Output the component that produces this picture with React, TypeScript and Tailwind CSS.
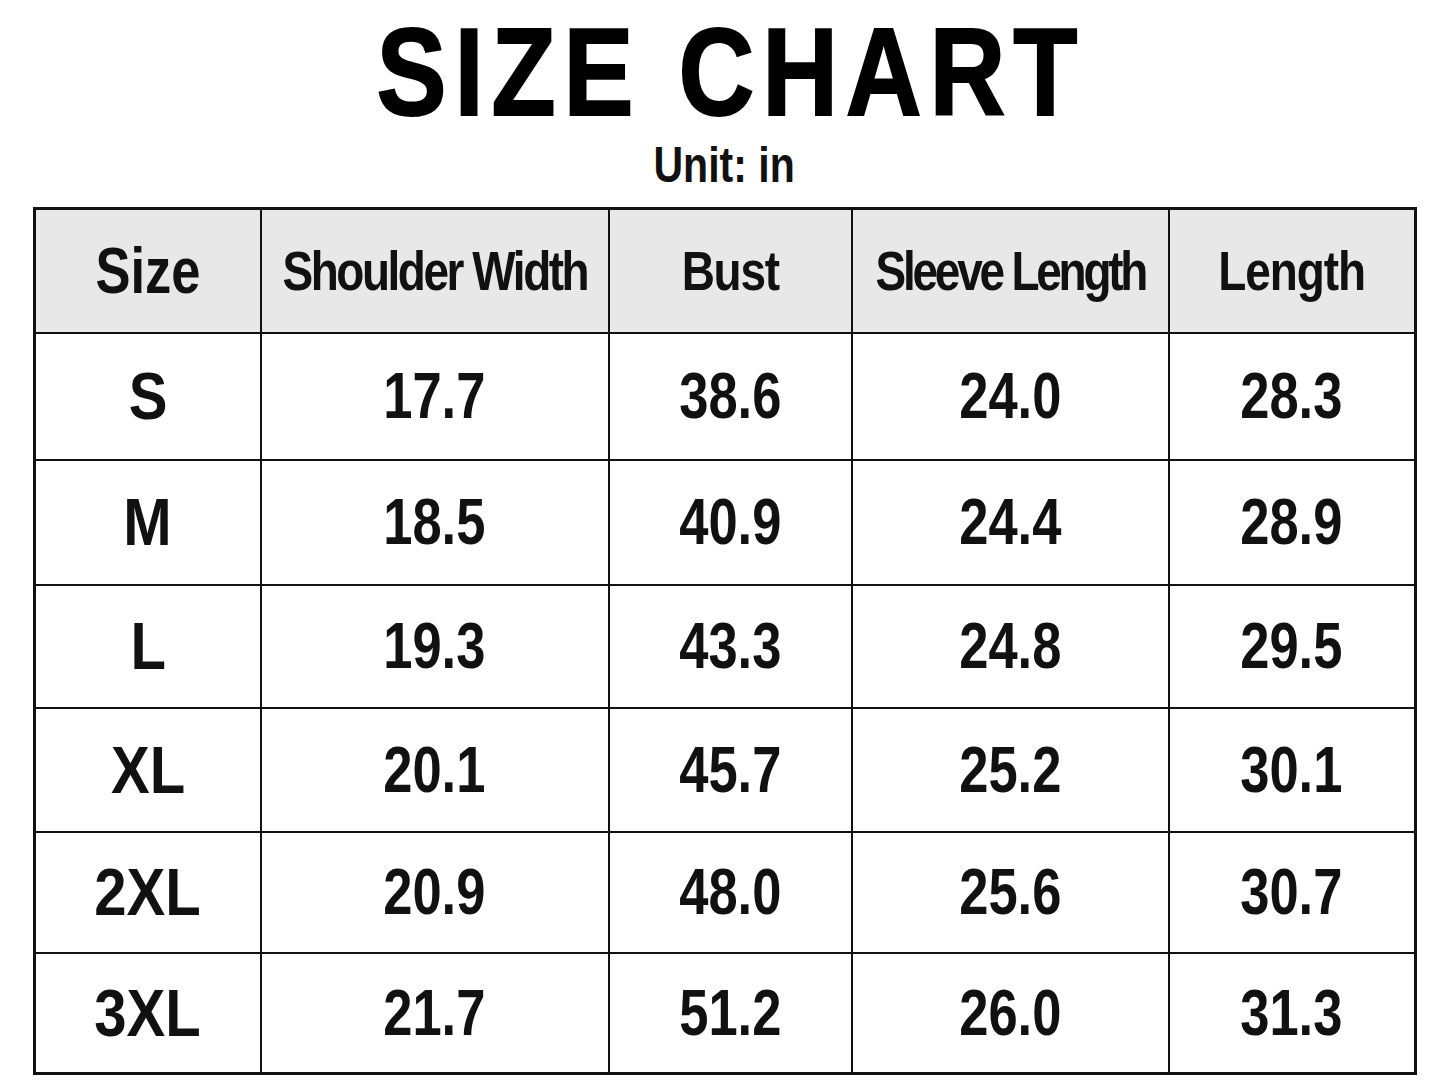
const rows = [
  { size: "S", values: ["17.7", "38.6", "24.0", "28.3"] },
  { size: "M", values: ["18.5", "40.9", "24.4", "28.9"] },
  { size: "L", values: ["19.3", "43.3", "24.8", "29.5"] },
  { size: "XL", values: ["20.1", "45.7", "25.2", "30.1"] },
  { size: "2XL", values: ["20.9", "48.0", "25.6", "30.7"] },
  { size: "3XL", values: ["21.7", "51.2", "26.0", "31.3"] },
];

const rowHeights = ["h-[127px]", "h-[125px]", "h-[123px]", "h-[124px]", "h-[121px]", "h-[121px]"];

const headers = [
  { label: "Size", cls: "text-[64px]" },
  { label: "Shoulder Width", cls: "text-[56px] tracking-[-0.053em]" },
  { label: "Bust", cls: "text-[56px] tracking-[-0.027em]" },
  { label: "Sleeve Length", cls: "text-[56px] tracking-[-0.07em]" },
  { label: "Length", cls: "text-[56px] tracking-[-0.022em]" },
];

// narrow bold look: Arial-width font squeezed horizontally
function Narrow({
  children,
  className = "",
  wide = false,
}: {
  children: React.ReactNode;
  className?: string;
  wide?: boolean;
}) {
  return (
    <div className="flex justify-center">
      <span
        className={`inline-block whitespace-nowrap leading-none ${wide ? "scale-x-[0.88]" : "scale-x-[0.82]"} ${className}`}
      >
        {children}
      </span>
    </div>
  );
}

export default function App() {
  return (
    <div className="w-[1448px] h-[1086px] bg-white text-[#111] overflow-hidden font-['Liberation_Sans',Arial,sans-serif] font-bold">
      {/* Title */}
      <div className="flex flex-col items-center pt-[9px]">
        <h1 className="ml-[14px] text-[125px] leading-none tracking-[0.075em] scale-x-[0.84] text-black whitespace-nowrap [-webkit-text-stroke:2px_black]">
          SIZE CHART
        </h1>
        <div className="mt-[6px]">
          <Narrow className="text-[50px]">Unit: in</Narrow>
        </div>
      </div>

      {/* Table */}
      <table className="ml-[33px] mt-[17px] w-[1381px] table-fixed border-collapse border-[3px] border-[#111] text-center">
        <colgroup>
          <col className="w-[226px]" />
          <col className="w-[348px]" />
          <col className="w-[243px]" />
          <col className="w-[317px]" />
          <col className="w-[247px]" />
        </colgroup>
        <thead>
          <tr className="h-[124px] bg-[#e8e8e8]">
            {headers.map((h) => (
              <th key={h.label} className="border-2 border-[#111] p-0 align-middle font-bold">
                <Narrow className={h.cls}>{h.label}</Narrow>
              </th>
            ))}
          </tr>
        </thead>
        <tbody>
          {rows.map((row, i) => (
            <tr key={row.size} className={rowHeights[i]}>
              <td className="border-2 border-[#111] p-0 align-middle">
                <Narrow wide className="text-[66px]">
                  {row.size}
                </Narrow>
              </td>
              {row.values.map((v, j) => (
                <td key={j} className="border-2 border-[#111] p-0 align-middle">
                  <Narrow className="text-[64px]">{v}</Narrow>
                </td>
              ))}
            </tr>
          ))}
        </tbody>
      </table>
    </div>
  );
}
